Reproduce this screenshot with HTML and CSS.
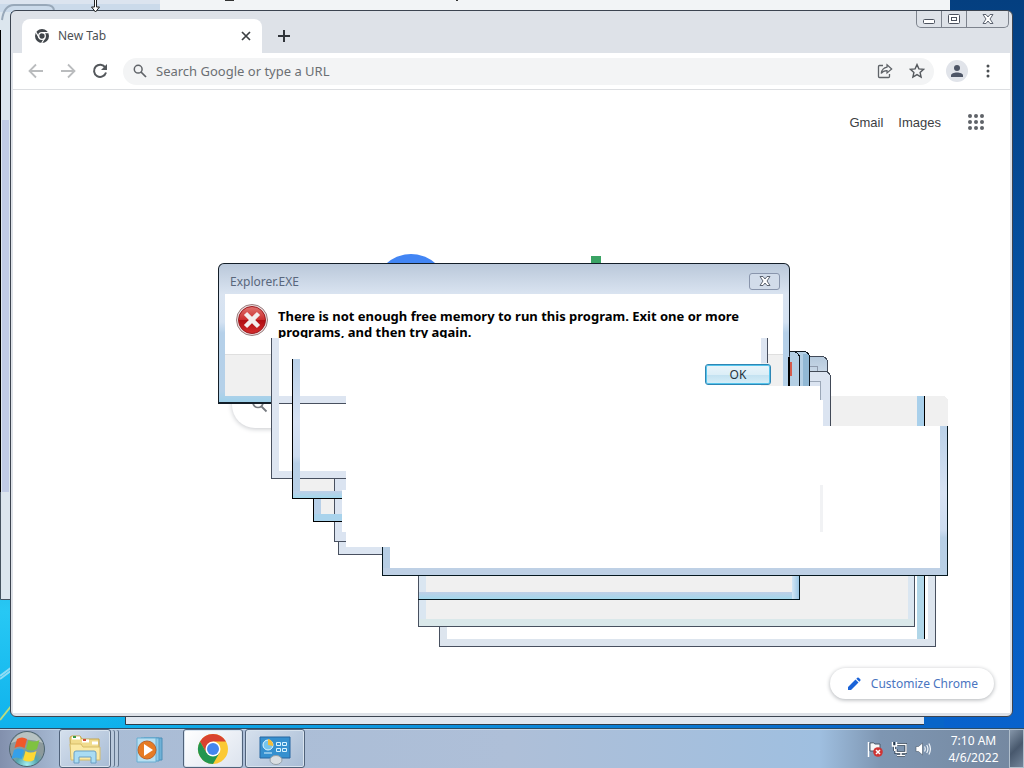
FILE: index.html
```html
<!DOCTYPE html>
<html lang="en">
<head>
<meta charset="utf-8">
<title>New Tab</title>
<link rel="stylesheet" href="styles.css">
</head>
<body>
<main class="desktop">
  <svg class="wallpaper" aria-hidden="true">
    <path d="M0 676 12 667M0 679 12 670" stroke="#8fdcf5" stroke-width="2"/>
    <path d="M0 720 12 705" stroke="#b9dc82" stroke-width="2"/>
    <path fill="#dce4ef" d="M0 0h950v12H0z"/>
    <path fill="#f2f4f6" d="M160 0h790v12H160z"/>
    <path fill="#cbdaea" d="M0 4h160v8H0z"/>
    <path fill="#dce6ee" d="M0 12h11v587H0z"/>
    <path fill="#c0cbe5" d="M2 120h7v372H2z"/>
    <path d="M2 20Q4 5 14 5H46Q54 5 54 11" fill="none" stroke="#98a8b9" stroke-width="2"/>
    <path d="M.5 30V492" stroke="#000"/>
    <path d="M.5 492V599.500H11" fill="none" stroke="#46535f"/>
    <path fill="#e1e7ef" d="M125 716h799v8H125z"/>
    <path d="M125.500 716v8.500H924" fill="none" stroke="#303b48"/>
    <path d="M225 .5h9M456 .5h2" stroke="#333"/>
  </svg>

  <section class="browser" aria-label="New Tab browser window">
    <header class="tabstrip">
      <div class="tab">
        <svg class="i16" viewBox="0 0 16 16" aria-hidden="true"><circle cx="8" cy="8" r="7" fill="#41464b"/><circle cx="8" cy="8" r="3.300" fill="#41464b" stroke="#fff" stroke-width="1.300"/><path d="M8 4.700h6.500M5.100 9.700 2 4.300M10.900 9.700 7.700 15" stroke="#fff" stroke-width="1.200"/></svg>
        <span class="tab-title">New Tab</span>
        <button class="bare" aria-label="Close tab"><svg class="i16" viewBox="0 0 16 16"><path d="M4 4l8 8M12 4l-8 8" stroke="#3c4043" stroke-width="1.700"/></svg></button>
      </div>
      <button class="bare new-tab" aria-label="Open new tab"><svg class="i16" viewBox="0 0 16 16"><path d="M8 2v12M2 8h12" stroke="#30343a" stroke-width="2"/></svg></button>
      <div class="caption">
        <button class="cap" aria-label="Minimize"><svg viewBox="0 0 14 12"><rect x="1.500" y="6.500" width="11" height="4" rx="1" fill="#fff" stroke="#4c525e"/></svg></button>
        <button class="cap" aria-label="Maximize"><svg viewBox="0 0 14 12"><rect x="1.500" y="1.500" width="11" height="9" rx="1" fill="#fff" stroke="#4c525e"/><rect x="4.500" y="4.500" width="5" height="3" fill="#fff" stroke="#4c525e"/></svg></button>
        <button class="cap cap-close" aria-label="Close"><svg viewBox="0 0 14 12"><path id="cross" d="M2 1.500h3l2 2.500 2-2.500h3L9 6l3 4.500H9L7 8l-2 2.500H2L5 6z" fill="#fff" stroke="#5c6370"/></svg></button>
      </div>
    </header>
    <nav class="toolbar" aria-label="Browser toolbar">
      <button class="bare" aria-label="Back"><svg class="i20" viewBox="0 0 20 20"><path d="M17 10H4M10 3.500 3.500 10l6.500 6.500" fill="none" stroke="#babcbe" stroke-width="1.800"/></svg></button>
      <button class="bare" aria-label="Forward"><svg class="i20" viewBox="0 0 20 20"><path d="M3 10h13M10 3.500l6.500 6.500-6.500 6.500" fill="none" stroke="#babcbe" stroke-width="1.800"/></svg></button>
      <button class="bare" aria-label="Reload"><svg class="i20" viewBox="0 0 20 20"><path d="M15.300 6.500A6.100 6.100 0 1 0 16 11.500" fill="none" stroke="#53575b" stroke-width="2"/><path d="M17 3v6h-6z" fill="#53575b"/></svg></button>
      <div class="omnibox">
        <svg class="i16" viewBox="0 0 16 16" aria-hidden="true"><circle cx="6.200" cy="6.200" r="3.900" fill="none" stroke="#5f6368" stroke-width="1.500"/><path d="M9 9l5 5" stroke="#5f6368" stroke-width="1.700"/></svg>
        <input type="text" aria-label="Address and search bar" placeholder="Search Google or type a URL">
        <button class="bare" aria-label="Share"><svg class="i16" viewBox="0 0 16 16"><path d="M6 2.500H2.500Q1.500 2.500 1.500 3.500v10q0 1 1 1h9q1 0 1-1V11" fill="none" stroke="#5f6368" stroke-width="1.300"/><path d="M10 1.800 14.700 6 10 10V7.600Q6.200 7.500 4.200 10.500 5 5 10 4.200z" fill="none" stroke="#5f6368" stroke-width="1.200"/></svg></button>
        <button class="bare" aria-label="Bookmark this tab"><svg class="i16" viewBox="0 0 16 16"><path d="M8 1.600l1.900 4.300 4.700.4-3.500 3.100 1 4.600L8 11.600 3.900 14l1-4.600L1.400 6.300l4.700-.4z" fill="none" stroke="#55595e" stroke-width="1.400"/></svg></button>
      </div>
      <button class="bare avatar" aria-label="Profile"><svg class="i16" viewBox="0 0 16 16"><circle cx="8" cy="5" r="3" fill="#4d5566"/><path d="M2 14v-1.500C2 8.500 14 8.500 14 12.500V14z" fill="#4d5566"/></svg></button>
      <button class="bare menu" aria-label="Menu"><svg class="i16" viewBox="0 0 16 16"><g fill="#4a4e52"><circle cx="8" cy="3" r="1.500"/><circle cx="8" cy="8" r="1.500"/><circle cx="8" cy="13" r="1.500"/></g></svg></button>
    </nav>
    <div class="page">
      <div class="page-links">
        <a href="#">Gmail</a>
        <a href="#">Images</a>
        <button class="bare apps" aria-label="Google apps"><svg class="i20" viewBox="0 0 20 20"><g fill="#5f6368"><circle cx="4" cy="4" r="2"/><circle cx="10" cy="4" r="2"/><circle cx="16" cy="4" r="2"/><circle cx="4" cy="10" r="2"/><circle cx="10" cy="10" r="2"/><circle cx="16" cy="10" r="2"/><circle cx="4" cy="16" r="2"/><circle cx="10" cy="16" r="2"/><circle cx="16" cy="16" r="2"/></g></svg></button>
      </div>
      <div class="search-area">
        <svg class="logo" viewBox="0 0 272 92" aria-hidden="true"><circle cx="35" cy="38" r="37" fill="#4285f4"/><path fill="#3aa364" d="M215 3h10v60h-10z"/></svg>
        <div class="searchbox">
          <svg class="i20" viewBox="0 0 20 20" aria-hidden="true"><circle cx="8" cy="7.500" r="5" fill="none" stroke="#777b80" stroke-width="1.700"/><path d="M11.500 11.500l5 5" stroke="#777b80" stroke-width="1.800"/></svg>
        </div>
      </div>
      <div class="page-footer">
        <button class="customize"><svg class="i16" viewBox="0 0 16 16" aria-hidden="true"><path d="M2 14v-3L9.500 3.500l3 3L5 14zM10.300 2.700l1-1q.7-.6 1.400 0l1.600 1.600q.6.700 0 1.400l-1 1z" fill="#1a63d8"/></svg>Customize Chrome</button>
      </div>
    </div>
  </section>

  <section class="dialog" role="dialog" aria-labelledby="dlg-title">
    <header class="dialog-bar">
      <span id="dlg-title">Explorer.EXE</span>
      <button class="dialog-x" aria-label="Close dialog"><svg viewBox="0 0 14 12"><use href="#cross"/></svg></button>
    </header>
    <div class="dialog-body">
      <svg class="error-icon" viewBox="0 0 32 32" aria-hidden="true">
        <defs><linearGradient id="red" x2="0" y2="1"><stop stop-color="#e0736f"/><stop offset=".48" stop-color="#cc3030"/><stop offset=".52" stop-color="#b00d12"/><stop offset="1" stop-color="#d52d2d"/></linearGradient></defs>
        <circle cx="16" cy="16" r="15.500" fill="#eadedf" stroke="#9b7d7e"/><circle cx="16" cy="16" r="13.500" fill="url(#red)" stroke="#9e1a1f"/>
        <path d="M9.500 9.500l13 13M22.500 9.500l-13 13" stroke="#f3eeee" stroke-width="4.500"/>
      </svg>
      <p>There is not enough free memory to run this program. Exit one or more programs, and then try again.</p>
    </div>
    <footer class="dialog-foot"></footer>
  </section>

  <svg class="trails" width="1024" height="728" viewBox="0 0 1024 728" aria-hidden="true" shape-rendering="crispEdges">
    <defs>
      <linearGradient id="edge" x2="0" y2="1"><stop stop-color="#bad1e8"/><stop offset=".45" stop-color="#d7e2f3"/><stop offset=".7" stop-color="#cddcf0"/><stop offset=".75" stop-color="#b7cfe6"/><stop offset="1" stop-color="#b9d0e6"/></linearGradient>
      <linearGradient id="glow" x2="0" y2="1"><stop stop-color="#bfcfe7"/><stop offset="1" stop-color="#a3d8ec"/></linearGradient>
      <linearGradient id="side"><stop stop-color="#d3e7f6"/><stop offset="1" stop-color="#9bc6e4"/></linearGradient>
      <linearGradient id="top" x2="0" y2="1"><stop stop-color="#b5c9dc"/><stop offset="1" stop-color="#dae4f1"/></linearGradient>
    </defs>
    <!-- stacked window corners on the right -->
    <path d="M789 356.500h32q6.500 0 6.500 7V386H789z" fill="url(#top)" stroke="#414957"/>
    <path d="M810 366.500h7.500v5" fill="none" stroke="#8f9bad"/>
    <path d="M790 352h13q6 0 6 6v28h-19z" fill="#b4cfe4"/>
    <path fill="#91b8d4" d="M803 354h6v32h-6z"/>
    <path d="M790 351.500h13q6.500 0 6.500 6.500v28M792 351.500q7.500 0 7.500 7V386" fill="none" stroke="#10181f"/>
    <path fill="#d55b4c" d="M790 362h2v14h-2z"/>
    <path d="M810 371.500h14q6.500 0 6.500 7V426H810z" fill="#dbe4f1"/>
    <path d="M810 371.500h14q6.500 0 6.500 7V426" fill="none" stroke="#414957"/>
    <path d="M810 381.500h10.500V400" fill="none" stroke="#9ba7b7"/>
    <path fill="#000" d="M788 357h2v29h-2z"/>
    <!-- ghost A -->
    <path fill="#fff" d="M271 338h490v66H271zM271 400h75v78h-75z"/>
    <path fill="#fff" d="M293 363h453v90H293zM346 386h474v162H346zM820 400h3v26h-3zM389 426h551v143H389z"/>
    <path fill="#dde5f1" d="M272 338h7v140h-7zM279 396h67v7h-67zM279 471h67v7h-67zM761 338h6v25h-6z"/>
    <path fill="#48505f" d="M271 338h1v141h-1zM279 403h67v1h-67zM271 478h75v1h-75zM767 338h1v25h-1z"/>
    <!-- ghosts B to E -->
    <path fill="#fff" d="M293 396h1v8h-1z"/>
    <path fill="#f0f0f0" d="M300 479h34v13h-34zM321 499h13v16h-13z"/>
    <path fill="#dbe4f1" d="M334 479h12v62h-12z"/>
    <path fill="#48505f" d="M334 479h1v63h-1zM334 541h12v1h-12z"/>
    <path fill="url(#edge)" d="M293 359h7v139h-7z"/>
    <path fill="url(#glow)" d="M293 491h49v7h-49z"/>
    <path fill="#000" d="M292 359h1v140h-1zM292 498h50v1h-50z"/>
    <path fill="#b8d0e8" d="M314 499h7v22h-7z"/>
    <path fill="#a9d3ec" d="M314 514h28v7h-28z"/>
    <path fill="#000" d="M313 499h1v23h-1zM313 521h29v1h-29z"/>
    <path fill="#fff" d="M342 490h5v42h-5z"/>
    <path fill="#dce5f1" d="M339 542h7v12h-7zM339 547h43v7h-43z"/>
    <path fill="#48505f" d="M338 542h1v13h-1zM338 554h44v1h-44z"/>
    <!-- ghost F -->
    <path fill="#b7cee4" d="M383 547h7v28h-7z"/>
    <path fill="#bed0e5" d="M383 568h564v7H383z"/>
    <path fill="url(#edge)" d="M940 426h7v149h-7z"/>
    <path fill="#06181f" d="M382 547h1v29h-1zM382 575h566v1H382zM947 426h1v150h-1z"/>
    <path fill="#f1f2f4" d="M820 485h3v47h-3z"/>
    <path fill="#f0f0f0" d="M831 396h111q6 0 6 6v24H831z"/>
    <path fill="#a9d0eb" d="M917 396h7v30h-7z"/>
    <path fill="#000" d="M924 396h1v30h-1z"/>
    <!-- ghosts G to I -->
    <path fill="#fff" d="M439 576h496v70H439z"/>
    <path fill="#f0f0f0" d="M418 576h496v50H418z"/>
    <path fill="#dae6f1" d="M419 576h7v50h-7zM908 576h6v50h-6z"/>
    <path fill="#dae8ea" d="M419 619h495v7H419z"/>
    <path fill="#48505f" d="M418 576h1v51h-1zM418 626h497v1H418zM914 576h1v51h-1z"/>
    <path fill="url(#glow)" d="M419 592h380v7H419z"/>
    <path fill="url(#side)" d="M792 576h7v23h-7z"/>
    <path fill="#06181f" d="M418 599h382v1H418zM799 576h1v24h-1z"/>
    <path fill="#dde5ee" d="M440 627h7v19h-7zM440 639h495v7H440zM928 576h7v70h-7z"/>
    <path fill="#48505f" d="M439 627h1v20h-1zM439 646h497v1H439zM935 576h1v71h-1z"/>
    <path fill="#b0d6e8" d="M917 576h7v63h-7z"/>
    <path fill="#000" d="M924 576h1v63h-1z"/>
  </svg>
  <button class="ok">OK</button>

  <svg class="cursor" viewBox="0 0 11 13" aria-hidden="true"><path d="M4.500 0v7H1.500l4 5 4-5H6.500V0" fill="#fff" stroke="#222"/></svg>
</main>

<footer class="taskbar">
  <button class="start" aria-label="Start">
    <svg viewBox="0 0 40 38" aria-hidden="true">
      <defs><radialGradient id="orb" cy=".95"><stop stop-color="#a5f0f0"/><stop offset=".6" stop-color="#55a5ae"/><stop offset="1" stop-color="#8d9a9c"/></radialGradient></defs>
      <circle cx="20" cy="19" r="17.500" fill="url(#orb)" stroke="#4c6470"/>
      <path d="M4 13Q11 2 20 2t16 11q-16-7-32 0z" fill="#d5dfdd" opacity=".6"/>
      <path d="M10 9q5-3 10 0l-2.500 9q-5-3-10 0z" fill="#f0582a"/><path d="M21.500 10q5 3 11 0L30 19q-5 3-11 0z" fill="#7fc241"/>
      <path d="M7 20q5-3 10 0l-2.500 9q-5-3-10 0z" fill="#35a0e8"/><path d="M18.500 21q5 3 11 0L27 30q-5 3-11 0z" fill="#fdd835"/>
    </svg>
  </button>
  <button class="task stacked" aria-label="Windows Explorer">
    <svg viewBox="0 0 36 32" aria-hidden="true"><path d="M3 5q0-2 2-2h8l2 3h17v18H4z" fill="#f1dc8d" stroke="#c4a44d"/><path d="M5 5h8M15 8h7M25 10h6" stroke="#fff" stroke-width="3"/><path d="M6 4h3" stroke="#3b9a47" stroke-width="2"/><path d="M16 7h3" stroke="#d34a37" stroke-width="2"/><path d="M3 11h11l2 3h17v13H4z" fill="#fbeaa5" stroke="#d6bd69"/><path d="M7 30V20q0-2 2-2h18q2 0 2 2v10h-5v-6H12v6z" fill="#a9dcf3" stroke="#6a9fc4"/></svg>
  </button>
  <button class="task plain" aria-label="Windows Media Player">
    <svg viewBox="0 0 36 32" aria-hidden="true"><path d="M11 5h18v22H11z" fill="#6fb1d6" stroke="#4c8fb8"/><path d="M8 5h18v23H8z" fill="#91cae7" stroke="#559dc7"/><path d="M4 5h19v24H4z" fill="#b7dff1" stroke="#69aed2"/><circle cx="14" cy="17" r="9" fill="#e67b24" stroke="#bb632b"/><path d="M11 11l9 6-9 6z" fill="#fff"/></svg>
  </button>
  <button class="task active" aria-label="Google Chrome">
    <svg viewBox="0 0 32 32" aria-hidden="true"><circle cx="16" cy="16" r="15" fill="#fbc934"/><path d="M16 16 3 8.500A15 15 0 0 1 29 8.500H16z" fill="#d9422f"/><path d="M3 8.500 9.500 19.800 16 9z" fill="#d9422f"/><path d="M3 8.500A15 15 0 0 0 16 31l6.500-11.300H9.500z" fill="#229650"/><circle cx="16" cy="16" r="7.500" fill="#fff"/><circle cx="16" cy="16" r="6" fill="#4486ee"/></svg>
  </button>
  <button class="task" aria-label="Control Panel">
    <svg viewBox="0 0 36 32" aria-hidden="true"><path d="M3 4h30v21H3z" fill="#3690cf" stroke="#2767a1"/><circle cx="11" cy="12" r="5" fill="#76c5ed" stroke="#e3f7ff"/><path d="M11 12V6a6 6 0 0 1 5 7z" fill="#f3bc39"/><path d="M19.500 9.500h4v3h-4zM25.500 9.500h4v3h-4zM19.500 15.500h4v3h-4zM25.500 15.500h4v3h-4zM7 20h8" fill="none" stroke="#d9f4ff"/><ellipse cx="19" cy="27" rx="6" ry="4.500" fill="#d9dee2" stroke="#959fa7"/></svg>
  </button>
  <div class="tray">
    <button class="bare" aria-label="Action Center"><svg class="i16" viewBox="0 0 16 16"><path d="M1.500 1v15" stroke="#fff" stroke-width="1.500"/><path d="M3 2q4-1 5 1h5v7H3z" fill="#f6f8f9" stroke="#4b5969"/><circle cx="11" cy="11" r="4.800" fill="#cf3434"/><path d="M9 9l4 4M13 9l-4 4" stroke="#fff" stroke-width="1.500"/></svg></button>
    <button class="bare" aria-label="Network"><svg class="i16" viewBox="0 0 16 16"><path d="M6 3.500h9v8H5V8M10 12v2.500M6 14.500h8M2.500 1v4M3.500 5v5" fill="none" stroke="#26384d" stroke-width="3"/><path d="M6 3.500h9v8H5V8M10 12v2.500M6 14.500h8M1.500 1v4h4V1M3.500 5v5" fill="none" stroke="#fff" stroke-width="1.400"/></svg></button>
    <button class="bare" aria-label="Volume"><svg class="i16" viewBox="0 0 16 16"><path d="M1 5.500h2.500L7.500 2v12l-4-3.500H1z" fill="#fff" stroke="#4b5969" stroke-width=".6"/><path d="M9.500 5.500q1.500 2.500 0 5M11.700 4q2.500 4 0 8M13.900 2.500q3 5.500 0 11" fill="none" stroke="#f1f6fa" stroke-width="1.200"/></svg></button>
  </div>
  <div class="clock"><time>7:10 AM</time><time>4/6/2022</time></div>
  <button class="show-desktop" aria-label="Show desktop"></button>
</footer>
</body>
</html>
```
FILE: styles.css
```css
* { box-sizing: border-box; }

body {
  margin: 0;
  height: 100vh;
  display: flex;
  flex-direction: column;
  overflow: hidden;
  font-family: "Noto Sans", "Open Sans", sans-serif;
  font-size: 12px;
  color: #4c5054;
}

button { font: inherit; color: inherit; cursor: pointer; }
svg { display: block; }
.i16 { width: 16px; height: 16px; }
.i20 { width: 20px; height: 20px; }

.bare {
  display: flex;
  align-items: center;
  justify-content: center;
  padding: 0;
  border: 0;
  background: none;
}

.desktop {
  position: relative;
  flex: 1;
  min-height: 0;
  overflow: hidden;
  background:
    linear-gradient(90deg, transparent 0, transparent 10%, #0865c8 85%),
    linear-gradient(#064684 0, #08509c 35%, #27c8f4 84%, #0fb2ec 100%);
}

.desktop::before {
  content: "";
  position: absolute;
  right: 0;
  top: 0;
  width: 80px;
  height: 100%;
  background: linear-gradient(#043f80, #0556ac 50%, #0862cc);
}

.wallpaper { position: absolute; width: 100%; height: 100%; }

/* Browser window */
.browser {
  position: absolute;
  inset: 10px 11px 11px 10px;
  display: flex;
  flex-direction: column;
  padding: 0 2px 3px;
  border: 1px solid #3c4450;
  border-radius: 6px;
  background: #dee2e8;
}

.tabstrip { display: flex; align-items: flex-end; height: 42px; }

.tab {
  display: flex;
  align-items: center;
  gap: 8px;
  width: 240px;
  height: 34px;
  margin-left: 9px;
  padding: 0 8px 0 12px;
  border-radius: 8px 8px 0 0;
  background: #fff;
}

.tab-title { flex: 1; line-height: 16px; padding-bottom: 1px; }
.new-tab { width: 28px; height: 34px; margin-left: 8px; }

.caption {
  display: flex;
  align-self: flex-start;
  height: 17px;
  margin-left: auto;
  margin-right: 1px;
  border: 1px solid #7d838d;
  border-top: 0;
  border-radius: 0 0 5px 5px;
}

.cap {
  display: flex;
  align-items: center;
  justify-content: center;
  width: 25px;
  padding: 0;
  border: 0;
  border-right: 1px solid #7d838d;
  background: none;
}

.cap svg, .dialog-x svg { width: 14px; height: 12px; }
.cap-close { width: 41px; border-right: 0; }

.toolbar {
  display: flex;
  align-items: center;
  gap: 12px;
  height: 37px;
  padding: 0 14px 0 13px;
  border-bottom: 1px solid #dcdee1;
  background: #fff;
}

.omnibox {
  display: flex;
  flex: 1;
  align-items: center;
  gap: 16px;
  height: 27px;
  margin-left: 1px;
  padding: 0 9px;
  border-radius: 14px;
  background: #f3f4f5;
}

.omnibox input {
  flex: 1;
  min-width: 0;
  margin-left: -8px;
  padding: 0;
  border: 0;
  outline: 0;
  background: none;
  font: inherit;
  font-size: 13px;
}

.omnibox input::placeholder { color: #6b6f73; opacity: 1; }
.avatar { width: 22px; height: 22px; border-radius: 50%; background: #e1e4ea; }

.page {
  display: flex;
  flex: 1;
  flex-direction: column;
  min-height: 0;
  background: #fff;
}

.page-links {
  display: flex;
  align-items: center;
  gap: 15px;
  justify-content: flex-end;
  padding: 22px 24px 0;
  font-family: "Liberation Sans", Arial, sans-serif;
  font-size: 13px;
}

.page-links a { color: #3c4043; text-decoration: none; }
.apps { margin-left: 10px; }

.search-area {
  display: flex;
  flex: 1;
  flex-direction: column;
  align-items: center;
  gap: 37px;
  padding-top: 121px;
}

.logo { width: 272px; height: 92px; }

.searchbox {
  display: flex;
  align-items: center;
  width: 56%;
  height: 46px;
  padding: 0 18px;
  border-radius: 23px;
  box-shadow: 0 1px 5px #c6c8cc;
}

.page-footer { display: flex; justify-content: flex-end; padding: 0 16px 14px; }

.customize {
  display: flex;
  align-items: center;
  gap: 9px;
  height: 31px;
  padding: 0 16px;
  border: 0;
  border-radius: 16px;
  background: #fff;
  box-shadow: 0 1px 4px #aeb1b5;
  color: #4a75bf;
}

/* Error dialog */
.dialog {
  position: absolute;
  left: 218px;
  top: 263px;
  width: 572px;
  padding: 0 6px 6px;
  border: 1px solid #131e28;
  border-bottom-width: 2px;
  border-radius: 6px 6px 0 0;
  background: linear-gradient(#bac8da 0, #dae4f1 22%, #d4e2f2 42%, #b5d0e9 50%, #b5d1e9 92%, #9fd1ea 100%);
}

.dialog-bar {
  display: flex;
  align-items: center;
  justify-content: space-between;
  height: 30px;
  padding: 4px 3px 0 5px;
  color: #59677c;
}

.dialog-x {
  display: flex;
  align-items: center;
  justify-content: center;
  width: 31px;
  height: 17px;
  padding: 0;
  border: 1px solid #8995ac;
  border-radius: 3px;
  background: #d2dcea;
}

.dialog-body {
  display: flex;
  align-items: flex-start;
  gap: 10px;
  height: 60px;
  padding: 10px 32px 0 11px;
  background: #fff;
}

.error-icon { flex: none; width: 32px; height: 32px; }

.dialog-body p {
  margin: 4px 0 0;
  color: #000;
  font-size: 13px;
  font-weight: 700;
  line-height: 16px;
}

.dialog-foot { height: 42px; border-top: 1px solid #dfdfdf; background: #f0f0f0; }
.trails { position: absolute; left: 0; top: 0; pointer-events: none; }

.ok {
  position: absolute;
  left: 705px;
  top: 364px;
  width: 66px;
  height: 21px;
  padding: 0;
  border: 1px solid #2f86b4;
  border-radius: 3px;
  background: linear-gradient(#eaf5fa 0, #dceef7 50%, #c2e1f0 51%, #d8eff8 100%);
  box-shadow: inset 0 0 0 1px #54c4ec;
  color: #26333d;
  line-height: 18px;
}

.cursor { position: absolute; left: 90px; top: 0; width: 11px; height: 13px; }

/* Taskbar */
.taskbar {
  display: flex;
  height: 40px;
  border-top: 1px solid #2d4d67;
  background: linear-gradient(90deg, #8290ad 0, #a9bcd5 6%, #aebfd8 50%, #9fbfe0 80%, #7e96b2 86%, #74879f 100%);
  box-shadow: inset 0 1px #c5d5e5;
}

.start { width: 54px; padding: 0 0 0 7px; border: 0; background: none; }
.start svg { width: 40px; height: 38px; }

.task {
  display: flex;
  align-items: center;
  justify-content: center;
  width: 60px;
  margin-right: 2px;
  padding: 0;
  border: 1px solid #50627a;
  border-radius: 3px;
  background: linear-gradient(135deg, #d5e0ed, #a8bcd5);
  box-shadow: inset 0 0 0 1px #d8e3ee;
}

.task svg { width: 36px; height: 32px; }
.stacked { width: 52px; margin: 0 10px 0 5px; box-shadow: inset 0 0 0 1px #d8e3ee, 4px 0 0 -1px #b9c9dc, 5px 0 0 -1px #61758e, 8px 0 0 -1px #b9c9dc, 9px 0 0 -1px #61758e; }
.plain { border-color: transparent; background: none; box-shadow: none; }
.active { background: linear-gradient(135deg, #fff, #dce3ee); }

.tray {
  display: flex;
  align-items: center;
  gap: 8px;
  margin-left: auto;
}

.clock {
  display: flex;
  flex-direction: column;
  align-items: center;
  justify-content: center;
  width: 78px;
  padding: 0 0 0 7px;
  color: #fff;
  line-height: 17px;
}

.show-desktop {
  width: 15px;
  padding: 0;
  border: 1px solid #b1bfcc;
  background: linear-gradient(135deg, #8596a9, #48586d 50%, #73859a);
}
```
